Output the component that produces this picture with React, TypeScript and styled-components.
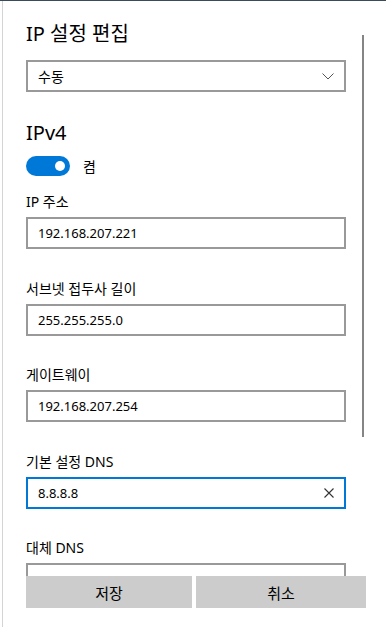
import styled, { createGlobalStyle } from 'styled-components';

const GlobalStyle = createGlobalStyle`
  html, body {
    margin: 0;
    padding: 0;
    background: #ffffff;
  }
  body {
    font-family: "Noto Sans", "Noto Sans CJK KR", sans-serif;
    color: #000000;
  }
`;

const Frame = styled.div`
  height: 627px;
  box-sizing: border-box;
  border-top: 1px solid #3b4a5a;
  padding-left: 2px;
  overflow: hidden;
`;

const Panel = styled.div`
  height: 100%;
  border-left: 1px solid #d4d4d4;
  display: flex;
  flex-direction: column;
`;

const ScrollArea = styled.div`
  flex: 1;
  min-height: 0;
  overflow: hidden;
  display: grid;
  grid-template-columns: 320px 2px;
  column-gap: 16px;
  align-items: start;
  padding-left: 23px;
`;

const Content = styled.div`
  display: flex;
  flex-direction: column;
  padding-top: 19px;
`;

const ScrollThumb = styled.div`
  margin-top: 34px;
  width: 2px;
  height: 402px;
  background: #858585;
`;

const Title = styled.h1`
  margin: 0 0 12px;
  font-size: 20px;
  font-weight: 400;
  line-height: 28px;
`;

const Select = styled.div`
  height: 32px;
  box-sizing: border-box;
  border: 2px solid #999999;
  display: flex;
  align-items: center;
  justify-content: space-between;
  padding: 0 10px 0 10px;
  font-size: 14px;
`;

const Section = styled.h2`
  margin: 27px 0 9px;
  font-size: 20px;
  font-weight: 400;
  line-height: 28px;
`;

const ToggleRow = styled.div`
  display: flex;
  align-items: center;
  gap: 13px;
  font-size: 14px;
  margin-bottom: 16px;
`;

const Toggle = styled.div<{ $on: boolean }>`
  width: 44px;
  height: 20px;
  box-sizing: border-box;
  border-radius: 10px;
  background: ${p => (p.$on ? '#0078d7' : '#ffffff')};
  display: flex;
  align-items: center;
  justify-content: ${p => (p.$on ? 'flex-end' : 'flex-start')};
  padding: 0 5px;
`;

const Knob = styled.span`
  width: 10px;
  height: 10px;
  border-radius: 50%;
  background: #ffffff;
`;

const Field = styled.div`
  display: flex;
  flex-direction: column;
  margin-bottom: 29.5px;
`;

const Label = styled.label`
  font-size: 14px;
  line-height: 20px;
  margin-bottom: 5px;
`;

const Input = styled.div<{ $focused?: boolean }>`
  height: 32px;
  box-sizing: border-box;
  border: 2px solid ${p => (p.$focused ? '#0078d7' : '#999999')};
  display: flex;
  align-items: center;
  justify-content: space-between;
  padding: 0 10px;
  font-size: 13px;
`;

const Footer = styled.div`
  display: flex;
  gap: 4px;
  padding: 0 20px 19px 23px;
`;

const Button = styled.button<{ $wide?: boolean }>`
  height: 32px;
  border: none;
  background: #cccccc;
  font-family: "Noto Sans CJK KR", sans-serif;
  font-size: 15px;
  color: #000000;
  width: ${p => (p.$wide ? '170px' : '166px')};
  padding: 0;
`;

const Chevron = () => (
  <svg width="12" height="7" viewBox="0 0 12 7">
    <path d="M0.5 0.5 L6 6 L11.5 0.5" fill="none" stroke="#555" strokeWidth="1" />
  </svg>
);

const Clear = () => (
  <svg width="10" height="10" viewBox="0 0 10 10">
    <path d="M0.5 0.5 L9.5 9.5 M9.5 0.5 L0.5 9.5" fill="none" stroke="#333" strokeWidth="1.1" />
  </svg>
);

const fields = [
  { label: 'IP 주소', value: '192.168.207.221' },
  { label: '서브넷 접두사 길이', value: '255.255.255.0' },
  { label: '게이트웨이', value: '192.168.207.254' },
  { label: '기본 설정 DNS', value: '8.8.8.8', focused: true },
  { label: '대체 DNS', value: '' },
];

export default function App() {
  return (
    <>
      <GlobalStyle />
      <Frame>
        <Panel>
          <ScrollArea>
            <Content>
              <Title>IP 설정 편집</Title>
              <Select>
                <span>수동</span>
                <Chevron />
              </Select>
              <Section>IPv4</Section>
              <ToggleRow>
                <Toggle $on>
                  <Knob />
                </Toggle>
                <span>켬</span>
              </ToggleRow>
              {fields.map(f => (
                <Field key={f.label}>
                  <Label>{f.label}</Label>
                  <Input $focused={f.focused}>
                    <span>{f.value}</span>
                    {f.focused && <Clear />}
                  </Input>
                </Field>
              ))}
            </Content>
            <ScrollThumb />
          </ScrollArea>
          <Footer>
            <Button>저장</Button>
            <Button $wide>취소</Button>
          </Footer>
        </Panel>
      </Frame>
    </>
  );
}
